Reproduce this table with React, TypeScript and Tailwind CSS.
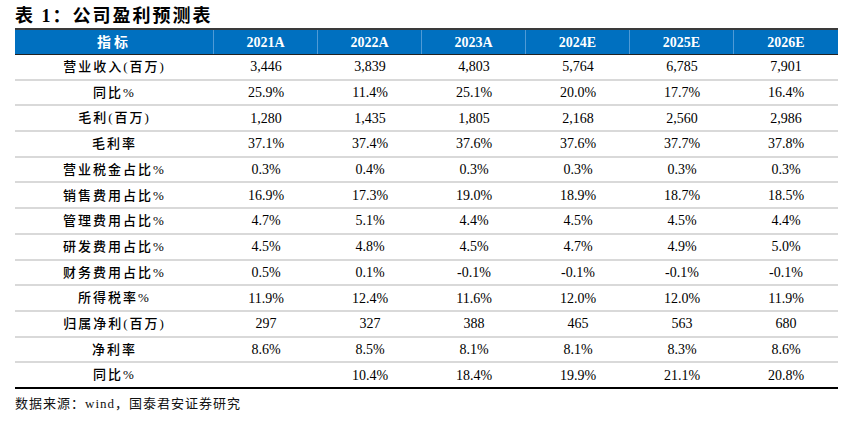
import React from 'react';

// 公司盈利预测表 — forecast table (report style)

const YEARS = ['2021A', '2022A', '2023A', '2024E', '2025E', '2026E'];

const ROWS: { label: string; values: string[] }[] = [
  { label: '营业收入(百万)', values: ['3,446', '3,839', '4,803', '5,764', '6,785', '7,901'] },
  { label: '同比%', values: ['25.9%', '11.4%', '25.1%', '20.0%', '17.7%', '16.4%'] },
  { label: '毛利(百万)', values: ['1,280', '1,435', '1,805', '2,168', '2,560', '2,986'] },
  { label: '毛利率', values: ['37.1%', '37.4%', '37.6%', '37.6%', '37.7%', '37.8%'] },
  { label: '营业税金占比%', values: ['0.3%', '0.4%', '0.3%', '0.3%', '0.3%', '0.3%'] },
  { label: '销售费用占比%', values: ['16.9%', '17.3%', '19.0%', '18.9%', '18.7%', '18.5%'] },
  { label: '管理费用占比%', values: ['4.7%', '5.1%', '4.4%', '4.5%', '4.5%', '4.4%'] },
  { label: '研发费用占比%', values: ['4.5%', '4.8%', '4.5%', '4.7%', '4.9%', '5.0%'] },
  { label: '财务费用占比%', values: ['0.5%', '0.1%', '-0.1%', '-0.1%', '-0.1%', '-0.1%'] },
  { label: '所得税率%', values: ['11.9%', '12.4%', '11.6%', '12.0%', '12.0%', '11.9%'] },
  { label: '归属净利(百万)', values: ['297', '327', '388', '465', '563', '680'] },
  { label: '净利率', values: ['8.6%', '8.5%', '8.1%', '8.1%', '8.3%', '8.6%'] },
  { label: '同比%', values: ['', '10.4%', '18.4%', '19.9%', '21.1%', '20.8%'] },
];

const SERIF = "font-['Liberation_Serif','Noto_Sans_CJK_SC',serif]";

export default function App() {
  return (
    <div className={`w-[849px] h-[429px] bg-white ${SERIF} text-black`}>
      {/* ---- Title ---- */}
      <div className="pl-[15px] pt-[6px] h-[28px] text-[18px] font-bold leading-[20px] tracking-[2px]">
        表 1：公司盈利预测表
      </div>

      {/* ---- Table ---- */}
      <div className="ml-[15px] w-[823px]">
        {/* Header */}
        <div className="flex h-[27px] bg-[#0070c0] border-t-2 border-b border-t-[#3a3a3a] border-b-[#222] text-white font-bold text-[14px]">
          <div className="w-[199px] flex items-center justify-center border-r border-r-[#4f9ad6] tracking-[3px]">
            指标
          </div>
          {YEARS.map((y, i) => (
            <div
              key={y}
              className={`w-[104px] flex items-center justify-center ${i < YEARS.length - 1 ? 'border-r border-r-[#4f9ad6]' : ''}`}
            >
              {y}
            </div>
          ))}
        </div>

        {/* Body rows */}
        {ROWS.map((row, r) => (
          <div
            key={r}
            className={`flex h-[25.7px] text-[14px] ${r < ROWS.length - 1 ? 'border-b-2 border-b-[#d9d9d9]' : 'border-b-2 border-b-black'}`}
          >
            <div className="w-[199px] flex items-center justify-center font-medium text-[13px] tracking-[2px]">
              {row.label}
            </div>
            {row.values.map((v, i) => (
              <div key={i} className="w-[104px] flex items-center justify-center">
                {v}
              </div>
            ))}
          </div>
        ))}
      </div>

      {/* ---- Source note ---- */}
      <div className="pl-[15px] pt-[5px] text-[13px] tracking-[1px] text-[#111]">
        数据来源：wind，国泰君安证券研究
      </div>
    </div>
  );
}
